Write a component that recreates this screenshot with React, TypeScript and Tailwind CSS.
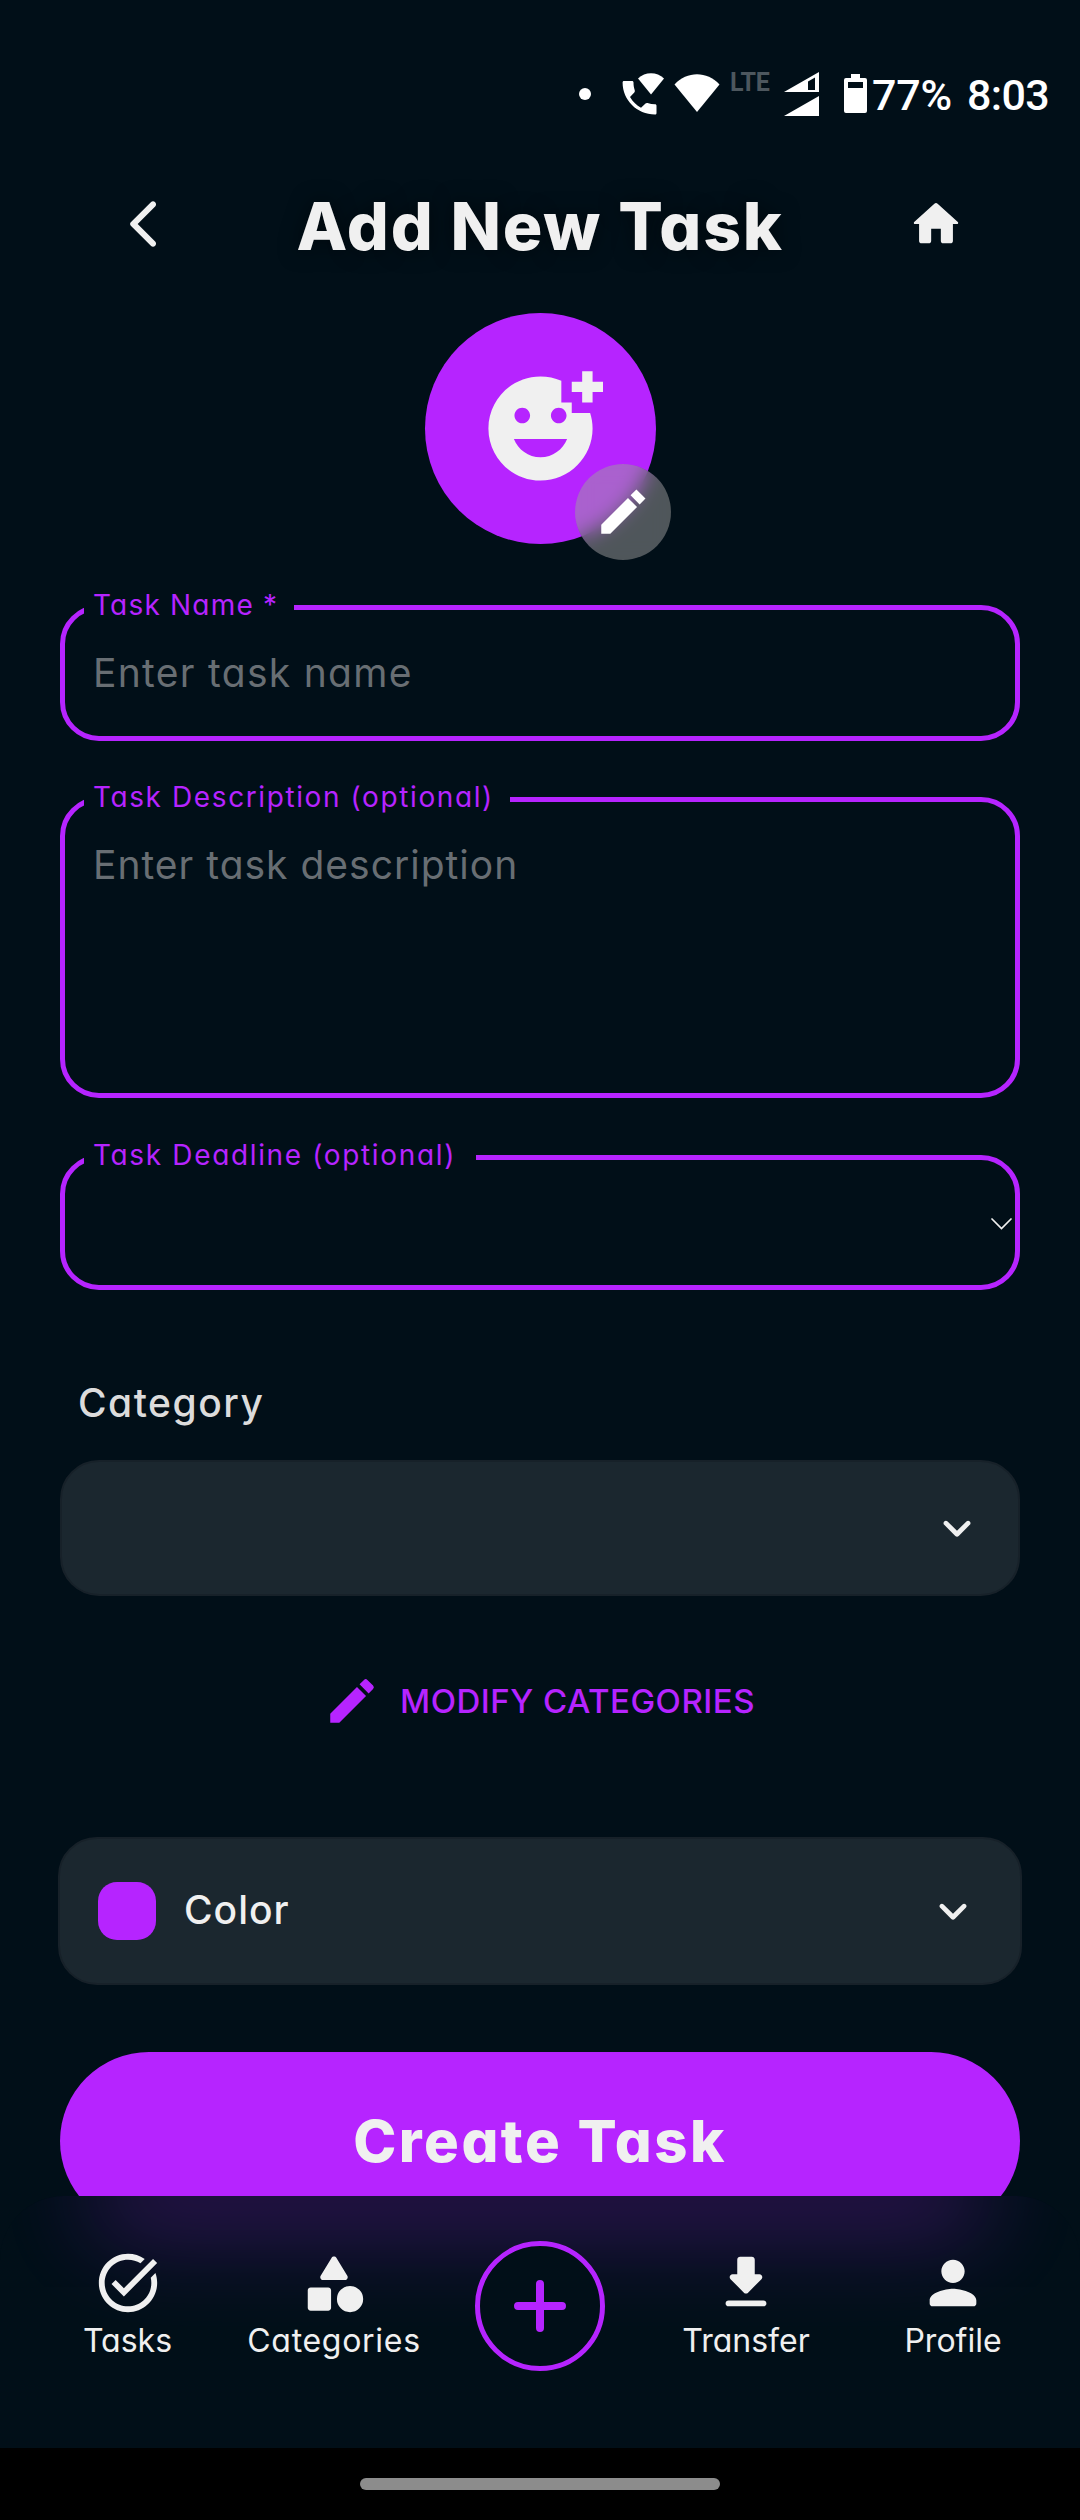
import React from "react";

const ICONS = {
  back: "M16.62 2.99c-.49-.49-1.28-.49-1.77 0L6.54 11.3c-.39.39-.39 1.02 0 1.41l8.31 8.31c.49.49 1.28.49 1.77 0s.49-1.28 0-1.77L9.38 12l7.25-7.25c.48-.48.48-1.28-.01-1.76z",
  home: "M10 19v-5h4v5c0 .55.45 1 1 1h3c.55 0 1-.45 1-1v-7h1.7c.46 0 .68-.57.33-.87L12.67 3.6c-.38-.34-.96-.34-1.34 0l-8.36 7.53c-.34.3-.13.87.33.87H5v7c0 .55.45 1 1 1h3c.55 0 1-.45 1-1z",
  edit: "M3 17.25V21h3.75L17.81 9.94l-3.75-3.75L3 17.25zM20.71 7.04a.996.996 0 0 0 0-1.41l-2.34-2.34a.996.996 0 0 0-1.41 0l-1.83 1.83 3.75 3.75 1.83-1.83z",
  editSharp: "M3 17.25V21h3.75L17.81 9.94l-3.75-3.75L3 17.25zM21.3 6.45l-3.75-3.75-2.42 2.42 3.75 3.75z",
  expand: "M15.88 9.29 12 13.17 8.12 9.29c-.39-.39-1.02-.39-1.41 0-.39.39-.39 1.02 0 1.41l4.59 4.59c.39.39 1.02.39 1.41 0l4.59-4.59c.39-.39.39-1.02 0-1.41-.39-.38-1.03-.39-1.42 0z",
  tasks: "M22 5.18 10.59 16.6l-4.24-4.24 1.41-1.41 2.83 2.83 10-10L22 5.18zM12 20c-4.41 0-8-3.59-8-8s3.59-8 8-8c1.57 0 3.04.46 4.28 1.25l1.45-1.45A10.02 10.02 0 0 0 12 2C6.48 2 2 6.48 2 12s4.48 10 10 10 10-4.48 10-10c0-1.19-.22-2.33-.6-3.39l-1.6 1.6c.13.58.2 1.18.2 1.79 0 4.41-3.59 8-8 8z",
  categories: "M11.15 3.4 7.43 9.48c-.41.66.07 1.52.85 1.52h7.43c.78 0 1.26-.86.85-1.52L12.85 3.4c-.39-.64-1.31-.64-1.7 0zM17.5 13a4.5 4.5 0 1 0 0 9 4.5 4.5 0 0 0 0-9zM4 21.5h6c.55 0 1-.45 1-1v-6c0-.55-.45-1-1-1H4c-.55 0-1 .45-1 1v6c0 .55.45 1 1 1z",
  transfer: "M16.59 9H15V4c0-.55-.45-1-1-1h-4c-.55 0-1 .45-1 1v5H7.41c-.89 0-1.34 1.08-.71 1.71l4.59 4.59c.39.39 1.02.39 1.41 0l4.59-4.59c.63-.63.19-1.71-.7-1.71zM5 19c0 .55.45 1 1 1h12c.55 0 1-.45 1-1s-.45-1-1-1H6c-.55 0-1 .45-1 1z",
  profile: "M12 12c2.21 0 4-1.79 4-4s-1.79-4-4-4-4 1.79-4 4 1.79 4 4 4zm0 2c-2.67 0-8 1.34-8 4v1c0 .55.45 1 1 1h14c.55 0 1-.45 1-1v-1c0-2.66-5.33-4-8-4z",
  addReaction: "M18 9V7h-2V2.84A9.93 9.93 0 0 0 11.99 2C6.47 2 2 6.48 2 12s4.47 10 9.99 10C17.52 22 22 17.52 22 12c0-1.05-.17-2.05-.47-3H18zm-2.5-1c.83 0 1.5.67 1.5 1.5s-.67 1.5-1.5 1.5-1.5-.67-1.5-1.5.67-1.5 1.5-1.5zm-7 0c.83 0 1.5.67 1.5 1.5S9.33 11 8.5 11 7 10.33 7 9.5 7.67 8 8.5 8zm3.5 9.5c-2.33 0-4.31-1.46-5.11-3.5h10.22c-.8 2.04-2.78 3.5-5.11 3.5zM22 3h2v2h-2v2h-2V5h-2V3h2V1h2v2z",
};

function Icon({ d, className }: { d: string; className: string }) {
  return (
    <svg viewBox="0 0 24 24" fill="currentColor" overflow="visible" className={"block shrink-0 " + className}>
      <path d={d} />
    </svg>
  );
}

function StatusBar() {
  return (
    <header className="flex h-[146px] items-start pl-[579px] pt-[68px] font-['Roboto'] font-medium text-white">
      <span className="mt-5 size-3 rounded-full bg-white" />
      <svg viewBox="0 0 42 42" fill="currentColor" className="ml-[31px] mt-[5px] h-[42px] w-[42px]">
        <path d="M2 8h8c1 0 1.500.6 1.500 1.500 0 3 .5 5.500 1.300 8 .2.8 0 1.500-.5 2l-4.300 4.500c3 5 6.500 8.200 11 10.800l4.500-4.300c.6-.6 1.300-.7 2-.5 2.500.8 5 1.200 7.500 1.200 1 0 1.500.6 1.500 1.500v7.300c0 1-.6 1.500-1.500 1.500C15 41.500.6 27 .6 9.500.6 8.600 1 8 2 8z" />
        <path d="M16 5.500C23-1.500 35-1.500 42 5.500L29 21.500z" />
      </svg>
      <svg viewBox="0 0 46 38" fill="currentColor" className="ml-[10px] mt-[6px] h-[38px] w-[46px]">
        <path d="M.5 10.500C13-3.200 33-3.200 45.500 10.500L23 38z" />
      </svg>
      <span className="ml-[10px] mt-px w-[40px] text-[25px] font-bold leading-[28px] tracking-[-0.3px] text-[#4d575e]">LTE</span>
      <svg viewBox="0 0 35 44" fill="currentColor" className="ml-[14px] mt-1 h-[44px] w-[35px]">
        <path fillRule="evenodd" d="M0 20 35 0v20zM24 18h7V5.500L24 9.500z" />
        <path d="M0 44 35 24v20z" />
      </svg>
      <svg viewBox="0 0 23 39" fill="currentColor" className="ml-[25px] mt-[6px] h-[39px] w-[23px]">
        <path fillRule="evenodd" d="M7 0h9v4h5a2 2 0 0 1 2 2v31a2 2 0 0 1-2 2H2a2 2 0 0 1-2-2V6a2 2 0 0 1 2-2h5zM4 8v6h15V8z" />
      </svg>
      <span className="ml-[5px] text-[43px] leading-[54px] tracking-[-0.2px]">77%</span>
      <span className="ml-[15px] text-[43px] leading-[54px] tracking-[-0.6px]">8:03</span>
    </header>
  );
}

function Field({
  label,
  className,
  legendClass,
  children,
}: {
  label: string;
  className: string;
  legendClass: string;
  children?: React.ReactNode;
}) {
  return (
    <fieldset className={"rounded-[39px] border-[5px] border-[#b624ff] pl-[19px] " + className}>
      <legend className={"h-[33px] whitespace-nowrap pl-[9px] text-[28px] leading-[28px] text-[#b624ff] " + legendClass}>
        {label}
      </legend>
      {children}
    </fieldset>
  );
}

function NavItem({ icon, label, className }: { icon: string; label: string; className: string }) {
  return (
    <div className={"flex flex-col items-center whitespace-nowrap pt-[52px] text-[32px] leading-[40px] " + className}>
      <Icon d={icon} className="size-[70px]" />
      <span className="mt-[3px]">{label}</span>
    </div>
  );
}

export default function App() {
  return (
    <div className="relative flex h-[2520px] w-[1080px] flex-col overflow-hidden bg-[#010f18] font-['Inter',sans-serif] text-[#f0f0f0] [font-feature-settings:'cv11']">
      <StatusBar />

      <div className="flex h-[156px] items-center justify-between pl-[115px] pr-[115px]">
        <Icon d={ICONS.back} className="size-[58px]" />
        <h1 className="mt-[4px] whitespace-nowrap text-[66px] font-extrabold leading-[80px] tracking-[1.7px] [text-shadow:0_0_20px_#00000080]">
          Add New Task
        </h1>
        <Icon d={ICONS.home} className="size-[58px]" />
      </div>

      <div className="relative mt-[11px] flex size-[231px] shrink-0 items-center justify-center self-center rounded-full bg-[#b624ff]">
        <Icon d={ICONS.addReaction} className="size-[125px]" />
        <div className="absolute left-[150px] top-[151px] flex size-[96px] items-center justify-center rounded-full bg-[#9e9e9e]/50 text-white backdrop-blur-[10px]">
          <Icon d={ICONS.editSharp} className="size-[58px]" />
        </div>
      </div>

      <main className="flex flex-col px-[60px] pt-[47px]">
        <Field label="Task Name *" className="h-[150px]" legendClass="w-[210px] tracking-[1.2px]">
          <p className="pl-[9px] pt-[25px] text-[39px] leading-[48px] tracking-[1.300px] text-[#686e73]">Enter task name</p>
        </Field>
        <Field label="Task Description (optional)" className="mt-[42px] h-[315px]" legendClass="w-[426px] tracking-[1.6px]">
          <p className="pl-[9px] pt-[25px] text-[39px] leading-[48px] tracking-[1px] text-[#686e73]">Enter task description</p>
        </Field>
        <Field label="Task Deadline (optional)" className="mt-[43px] h-[149px]" legendClass="w-[392px] tracking-[1.65px]">
          <div className="flex justify-end pr-[3px] pt-[42px]">
            <svg viewBox="0 0 22 14" fill="none" stroke="currentColor" strokeWidth="1.700" strokeLinecap="round" className="mt-[1px] h-[14px] w-[22px]">
              <path d="M2 2l9.500 9.500L21 2" />
            </svg>
          </div>
        </Field>

        <h2 className="ml-[18px] mt-[87px] text-[39px] font-medium leading-[52px] tracking-[1.5px] text-[#dcdcdc]">Category</h2>
        <div className="mt-[31px] flex h-[136px] items-center justify-end rounded-[39px] border-2 border-[#172129] bg-[#1b272f] pr-[32px]">
          <Icon d={ICONS.expand} className="size-[58px]" />
        </div>

        <div className="mt-[76px] flex h-[58px] items-center justify-center gap-[19px] pr-[2px] text-[#b624ff]">
          <Icon d={ICONS.edit} className="size-[58px]" />
          <span className="whitespace-nowrap text-[33px] font-medium leading-[58px] tracking-[0.5px]">MODIFY CATEGORIES</span>
        </div>

        <div className="-mx-[2px] mt-[107px] flex h-[148px] items-center rounded-[39px] border-2 border-[#172129] bg-[#1b272f] pl-[38px] pr-[38px]">
          <span className="size-[58px] rounded-[19px] bg-[#b624ff]" />
          <span className="-mt-[2px] ml-[28px] flex-1 text-[39px] font-medium leading-[52px] tracking-[1px]">Color</span>
          <Icon d={ICONS.expand} className="size-[58px]" />
        </div>

        <button className="mt-[67px] h-[178px] shrink-0 rounded-full bg-[#b624ff] text-[58px] font-extrabold leading-[70px] tracking-[2.500px]">
          Create Task
        </button>
      </main>

      <div className="absolute inset-x-0 bottom-0">
        <nav className="relative flex h-[252px] overflow-hidden rounded-t-[64px] bg-[#010f18]">
          <div className="absolute inset-x-[90px] -top-[34px] h-[68px] rounded-[34px] bg-[#b624ff] opacity-[0.31] blur-[48px]" />
          <div className="relative flex">
            <NavItem icon={ICONS.tasks} label="Tasks" className="w-[255px]" />
            <NavItem icon={ICONS.categories} label="Categories" className="w-[158px] tracking-[0.7px]" />
            <div className="ml-[62px] mt-[45px] flex size-[130px] items-center justify-center rounded-full border-[5px] border-[#b624ff] bg-[#010f18]">
              <svg viewBox="0 0 54 54" fill="none" stroke="#b624ff" strokeWidth="8" strokeLinecap="round" className="size-[54px]">
                <path d="M27 5v44M5 27h44" />
              </svg>
            </div>
            <NavItem icon={ICONS.transfer} label="Transfer" className="ml-[41px] w-[200px]" />
            <NavItem icon={ICONS.profile} label="Profile" className="ml-[7px] w-[200px]" />
          </div>
        </nav>
        <div className="flex h-[72px] justify-center bg-black pt-[30px]">
          <div className="h-[12px] w-[360px] rounded-full bg-[#8c8c8c]" />
        </div>
      </div>
    </div>
  );
}
